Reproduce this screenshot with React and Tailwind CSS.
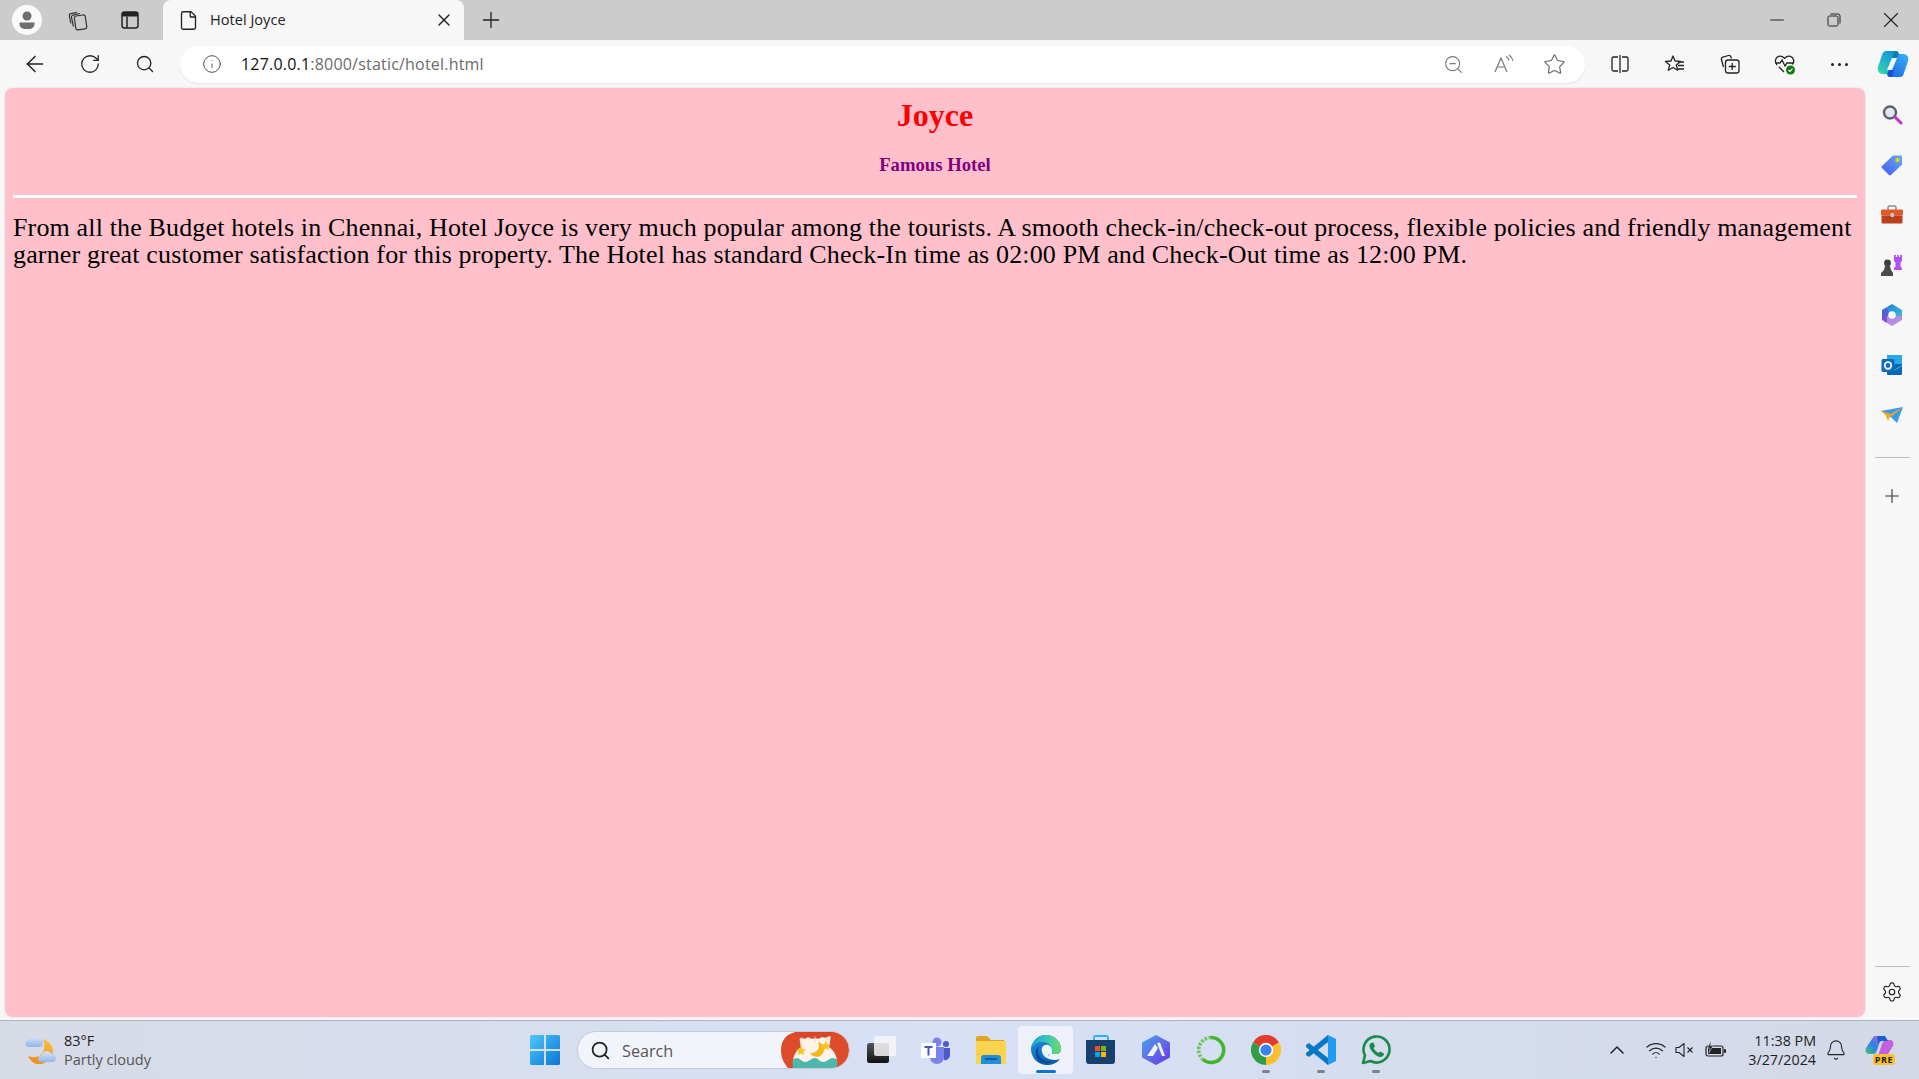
import React from "react";
import { ArrowLeft, RotateCw, Search, Info, ZoomOut, Star, Plus, X, Minus, Settings, ChevronUp, Wifi, Bell, File } from "lucide-react";

function Profile() {
  return (
    <svg width="30" height="30" viewBox="0 0 30 30">
      <circle cx="15" cy="15" r="15" fill="#fafafa" />
      <circle cx="15" cy="11" r="4.5" fill="#6e6e6e" />
      <path d="M7.5 17.5h15v1.500a5 5 0 0 1-5 5h-5a5 5 0 0 1-5-5z" fill="#6e6e6e" />
    </svg>
  );
}
function Workspaces() {
  return (
    <svg width="22" height="22" viewBox="0 0 22 22" fill="none" stroke="#333" strokeWidth="1.2">
      <rect x="8" y="6.5" width="11" height="14" rx="2" transform="rotate(-8 13 13)" />
      <path d="M6.5 17.5 4.5 8.5a2 2 0 0 1 1.5-2.4l7-1.600" />
      <path d="M3.800 14.500 2.400 7a2 2 0 0 1 1.600-2.300l6-1.400" />
    </svg>
  );
}
function TabsIcon() {
  return (
    <svg width="20" height="20" viewBox="0 0 20 20" fill="none">
      <rect x="2" y="2" width="16" height="16" rx="2.5" stroke="#222" strokeWidth="1.5" />
      <path d="M2 6.5V4.500A2.500 2.500 0 0 1 4.500 2h11A2.500 2.500 0 0 1 18 4.500v2z" fill="#222" />
      <path d="M7 6.500V18" stroke="#222" strokeWidth="1.5" />
    </svg>
  );
}
function RestoreIcon() {
  return (
    <svg width="14" height="14" viewBox="0 0 14 14" fill="none" stroke="#222" strokeWidth="1">
      <rect x="1" y="3" width="10" height="10" rx="1.5" />
      <path d="M3.500 1h7.500A2 2 0 0 1 13 3v7.500" />
    </svg>
  );
}
function ReadAloud() {
  return (
    <svg width="22" height="20" viewBox="0 0 22 20" fill="none" stroke="#777" strokeWidth="1.2">
      <path d="M2 18 8 4l6 14M4.200 13h7.600" />
      <path d="M13 2.500a7 7 0 0 1 3 4M16 1a9 9 0 0 1 4 6" />
    </svg>
  );
}
function SplitIcon() {
  return (
    <svg width="20" height="20" viewBox="0 0 20 20" fill="none" stroke="#222" strokeWidth="1.3">
      <path d="M8 3H3.500A1.500 1.500 0 0 0 2 4.500v11A1.500 1.500 0 0 0 3.500 17H8" />
      <path d="M12 3h4.500A1.500 1.500 0 0 1 18 4.500v11a1.500 1.500 0 0 1-1.500 1.500H12" />
      <path d="M10 1v18" />
    </svg>
  );
}
function FavList() {
  return (
    <svg width="22" height="20" viewBox="0 0 22 20" fill="none" stroke="#222" strokeWidth="1.3" strokeLinejoin="round">
      <path d="M9 2l2 5 5.500.4-4.200 3.500 1.400 5.300L9 13.500l-4.700 2.700 1.400-5.300L1.500 7.400 7 7z" />
      <path d="M14 8h6M14 11.500h6M14 15h6" />
    </svg>
  );
}
function Collections() {
  return (
    <svg width="22" height="22" viewBox="0 0 22 22" fill="none" stroke="#222" strokeWidth="1.3">
      <path d="M4.500 14 2.500 6.500a2 2 0 0 1 1.400-2.400l5.500-1.600a2 2 0 0 1 2.400 1.200l.6 1.800" />
      <rect x="6.500" y="7" width="13.500" height="13" rx="2.500" />
      <path d="M13.200 10v7M9.800 13.500h7" />
    </svg>
  );
}
function Health() {
  return (
    <svg width="24" height="24" viewBox="0 0 24 24" fill="none">
      <path d="M4 13C1.500 10 2 5.500 5.500 4.300c2.500-.8 4.500.4 6 2 1.500-1.600 3.500-2.800 6-2C21 5.500 21.500 10 19.500 12.500M6 15l5 5" stroke="#222" strokeWidth="1.3" />
      <path d="M2.500 11h4.500l2-3 3 6 2-3h6" stroke="#222" strokeWidth="1.3" />
      <circle cx="17.500" cy="18" r="4.500" fill="#107c10" />
      <path d="M15.500 18l1.500 1.500 2.500-2.800" stroke="#fff" strokeWidth="1.2" />
    </svg>
  );
}
function CopilotBlue() {
  return (
    <svg width="32" height="28" viewBox="0 0 32 28">
      <defs>
        <linearGradient id="cb1" x1="0" y1="1" x2="0.700" y2="0">
          <stop offset="0" stopColor="#35dca8" />
          <stop offset="1" stopColor="#1590dc" />
        </linearGradient>
        <linearGradient id="cb2" x1="0.300" y1="1" x2="1" y2="0">
          <stop offset="0" stopColor="#1e6fe6" />
          <stop offset="1" stopColor="#35b4f5" />
        </linearGradient>
      </defs>
      <path d="M9 1h9c2 0 2.500 1 3 2l-9 21H6C2 24 0 21 1 17L5 5C6 2 7 1 9 1z" fill="url(#cb1)" />
      <path d="M23 27h-9c-2 0-2.500-1-3-2l9-21h6c4 0 6 3 5 7l-4 12c-1 3-2 4-4 4z" fill="url(#cb2)" />
      <path d="M17 1h2c2 0 2.500 1 3 3l-2 4h-5z" fill="#0f7fb0" />
      <path d="M15 27h-2c-2 0-2.500-1-3-3l2-4h5z" fill="#1f4fd8" />
      <path d="M15 8h5l-5 12h-5z" fill="#f4fbff" />
    </svg>
  );
}
function Magnifier() {
  return (
    <svg width="22" height="22" viewBox="0 0 22 22" fill="none">
      <circle cx="9" cy="8.500" r="6" stroke="#5c5f66" strokeWidth="2.400" fill="#dfe8f2" />
      <path d="M14 13l6 6" stroke="#c22fd6" strokeWidth="3" strokeLinecap="round" />
    </svg>
  );
}
function TagIcon() {
  return (
    <svg width="22" height="22" viewBox="0 0 22 22">
      <defs>
        <linearGradient id="tg" x1="0" y1="1" x2="1" y2="0">
          <stop offset="0" stopColor="#4b55f0" />
          <stop offset="1" stopColor="#5cb0f5" />
        </linearGradient>
      </defs>
      <path d="M1 12 12 1.500h8a1 1 0 0 1 1 1v8L10 21a1.500 1.500 0 0 1-2 0L1 14a1.500 1.500 0 0 1 0-2z" fill="url(#tg)" />
      <circle cx="16.500" cy="6" r="2.200" fill="#f5c518" />
    </svg>
  );
}
function Toolbox() {
  return (
    <svg width="24" height="20" viewBox="0 0 24 20">
      <path d="M8 5V2.500A1.500 1.500 0 0 1 9.500 1h5A1.500 1.500 0 0 1 16 2.500V5" fill="none" stroke="#8a8a8a" strokeWidth="1.500" />
      <rect x="1" y="4.500" width="22" height="6" rx="1" fill="#e0592a" />
      <rect x="1.500" y="10.500" width="21" height="8" rx="1" fill="#b8401c" />
      <rect x="10.500" y="8" width="3.500" height="4" rx="1" fill="#c9c9c9" />
    </svg>
  );
}
function Chess() {
  return (
    <svg width="24" height="24" viewBox="0 0 24 24">
      <path d="M14 2h1.800v2h1.400V2h1.600v2h1.400V2H22v6l-1.500 1.500v4L22 15v2h-8v-2l1.500-1.500v-4L14 8z" fill="#b44ff0" />
      <circle cx="7.500" cy="10" r="3.400" fill="#3f3f3f" />
      <path d="M5 13h5l1 4 2 3v3H1v-3l3-3z" fill="#4a4a4a" />
    </svg>
  );
}
function M365() {
  return (
    <svg width="22" height="24" viewBox="0 0 22 24">
      <defs>
        <linearGradient id="m1" x1="0" y1="0" x2="1" y2="0.600">
          <stop offset="0" stopColor="#1f7fd8" />
          <stop offset="1" stopColor="#35b5d8" />
        </linearGradient>
        <linearGradient id="m2" x1="0" y1="0" x2="0.400" y2="1">
          <stop offset="0" stopColor="#2a6fd8" />
          <stop offset="1" stopColor="#8a4fd8" />
        </linearGradient>
      </defs>
      <path d="M6 4 1 7v10l5 3 4-5-1-5z" fill="url(#m2)" />
      <path d="M11 1 21 7v6h-6l-6-3L6 4z" fill="url(#m1)" />
      <path d="M21 13v4l-10 6-5-3v-7h9z" fill="#b98ae8" />
      <circle cx="11" cy="12" r="3.800" fill="#f7f7f7" />
    </svg>
  );
}
function Outlook() {
  return (
    <svg width="22" height="22" viewBox="0 0 22 22">
      <rect x="6" y="1" width="15" height="10" fill="#28a8ea" />
      <path d="M6 10h15v10a1 1 0 0 1-1 1H7a1 1 0 0 1-1-1z" fill="#0a64b4" />
      <path d="M21 11 13 16 6 11v2l7 4 8-5z" fill="#50d9ff" opacity="0.7" />
      <rect x="0.500" y="5" width="13" height="13" rx="1.500" fill="#0f6cbd" />
      <circle cx="7" cy="11.500" r="3.300" fill="none" stroke="#fff" strokeWidth="1.700" />
    </svg>
  );
}
function Send() {
  return (
    <svg width="24" height="18" viewBox="0 0 24 18">
      <path d="M1 5 23 1 17 17l-5-5z" fill="#3a9be8" />
      <path d="M1 5l10 3L8 15 5.500 9z" fill="#f0a91f" />
      <path d="M11 8 23 1 11 11z" fill="#f0a91f" />
    </svg>
  );
}
function Weather() {
  const cloud = "M4 11a3.500 3.500 0 0 1-.4-7A5.500 5.500 0 0 1 13.500 2.800 4.200 4.200 0 0 1 15 11z";
  return (
    <svg width="34" height="32" viewBox="0 0 34 32">
      <defs>
        <linearGradient id="wm" x1="0.800" y1="0" x2="0.200" y2="1">
          <stop offset="0" stopColor="#fbbf3c" />
          <stop offset="1" stopColor="#ee8a1e" />
        </linearGradient>
        <linearGradient id="wc" x1="0" y1="0" x2="0" y2="1">
          <stop offset="0" stopColor="#d6e4f7" />
          <stop offset="1" stopColor="#93b6ea" />
        </linearGradient>
      </defs>
      <path d="M20 5C28 8 31 14 30 19 28 27 20 31 14 30 10 29.500 7 26 5 22 12 25 20 22 21 15 22 11 21 8 20 5z" fill="url(#wm)" />
      <path d={cloud} transform="translate(2 2)" fill="url(#wc)" />
      <path d={cloud} transform="translate(15 17)" fill="url(#wc)" />
    </svg>
  );
}
function WinLogo() {
  return (
    <svg width="30" height="30" viewBox="0 0 30 30">
      <defs>
        <linearGradient id="wl" x1="0" y1="0" x2="1" y2="1">
          <stop offset="0" stopColor="#4fc8f8" />
          <stop offset="1" stopColor="#0a74d6" />
        </linearGradient>
      </defs>
      <path d="M0 1.500A1.500 1.500 0 0 1 1.500 0H14v14H0zM16 0h12.500A1.500 1.500 0 0 1 30 1.500V14H16zM0 16h14v14H1.500A1.500 1.500 0 0 1 0 28.500zM16 16h14v12.500a1.500 1.500 0 0 1-1.500 1.500H16z" fill="url(#wl)" />
    </svg>
  );
}
function SearchArt() {
  return (
    <svg width="68" height="36" viewBox="0 0 68 36">
      <rect x="0" y="0" width="68" height="36" rx="18" fill="#fdf3ea" />
      <path d="M11 28q5-4 9 0t9 0 9 0 9 0 10 0v8H11z" fill="#4fb8ad" />
      <path d="M14 0h40v3q-3 3-6 1-3 3-7 1-3 3-7 1-3 2-7-1-3 3-6 1-3 2-7-1z" fill="#d9452a" />
      <path d="M18 0C6 0 0 8 0 18c0 8 3 13 7 18h5c-1-7 0-15 8-21-1-5-2-10-2-15z" fill="#de4b2b" />
      <path d="M50 0c12 0 18 8 18 18 0 8-3 13-7 18h-5c1-7 0-15-8-21 1-5 2-10 2-15z" fill="#de4b2b" />
      <path d="M20 5v9M45 5v6M34 4v6" stroke="#e0c9a8" strokeWidth="0.700" />
      <path d="M37 10a7.500 7.500 0 1 1-8 11 7.500 7.500 0 0 0 8-11z" fill="#f4b81e" />
      <path d="M20 14l1.500 3 3.300.4-2.400 2.300.6 3.300-3-1.600-3 1.600.6-3.300-2.400-2.300 3.300-.4zM45 9l1.500 3 3.300.4-2.400 2.300.6 3.300-3-1.600-3 1.600.6-3.300-2.400-2.300 3.300-.4z" fill="#f5c51e" />
    </svg>
  );
}
function TaskView() {
  return (
    <svg width="30" height="30" viewBox="0 0 30 30">
      <defs>
        <linearGradient id="tv" x1="0" y1="0" x2="0" y2="1">
          <stop offset="0" stopColor="#555" />
          <stop offset="1" stopColor="#111" />
        </linearGradient>
      </defs>
      <rect x="1" y="8" width="22" height="20" rx="2.500" fill="url(#tv)" />
      <rect x="8" y="1" width="22" height="20" rx="2.500" fill="#f6f6f8" opacity="0.85" />
    </svg>
  );
}
function Teams() {
  return (
    <svg width="30" height="28" viewBox="0 0 30 28">
      <circle cx="16" cy="6" r="4.500" fill="#7b83eb" />
      <circle cx="25" cy="8" r="3" fill="#5059c9" />
      <path d="M21 12h8v8a5 5 0 0 1-6 4z" fill="#5059c9" />
      <path d="M9 11h14v10a6.500 6.500 0 0 1-14 0z" fill="#7b83eb" />
      <rect x="0" y="7" width="15" height="15" fill="#fff" />
      <path d="M3.500 10h8v2h-3v7.500h-2V12h-3z" fill="#4b53bc" />
    </svg>
  );
}
function Folder() {
  return (
    <svg width="30" height="28" viewBox="0 0 30 28">
      <path d="M0 2a2 2 0 0 1 2-2h9l4 4h13v6H0z" fill="#e0a526" />
      <path d="M0 5h30v23H0z" fill="#fbd34c" />
      <path d="M5 28v-6a3 3 0 0 1 3-3h14a3 3 0 0 1 3 3v6z" fill="#1f8fd8" />
      <rect x="9" y="22" width="12" height="2" fill="#0f5fa8" />
    </svg>
  );
}
function Edge() {
  return (
    <svg width="30" height="30" viewBox="0 0 30 30">
      <defs>
        <linearGradient id="eg" x1="0" y1="0.500" x2="1" y2="0.500">
          <stop offset="0" stopColor="#1a9fd8" />
          <stop offset="0.500" stopColor="#36c5b8" />
          <stop offset="1" stopColor="#6fdc62" />
        </linearGradient>
        <linearGradient id="eb" x1="0" y1="0" x2="0.700" y2="1">
          <stop offset="0" stopColor="#1c8fdc" />
          <stop offset="1" stopColor="#0c5fb0" />
        </linearGradient>
      </defs>
      <path d="M0 14C1 6 7 0 15 0c9 0 15 7 15 14 0 3-2 5-5 5h-6c-1 0-2 1-1 3 2 3 6 4 11 2-3 4-8 6-13 6C7 30 0 23 0 14z" fill="url(#eb)" />
      <path d="M9 27C4 23 3 15 8 11c-2 4-1 10 3 13 3 2 7 3 12 2-4 3-10 3-14 1z" fill="#0b4a98" />
      <path d="M0 14C1 6 7 0 15 0c9 0 15 7 15 14 0 3-2 5-5 5h-6c1-1 2-2 2-4 0-5-5-8-10-8-5 0-9 3-11 7z" fill="url(#eg)" />
      <path d="M21 15c0-3-3-6-7-5-3 1-4 4-3 7 1 4 4 6 7 7 3 .8 6 .6 8 0-3 .4-6-.4-8-2.400-1-1.600-1-2.600 1-2.600h2z" fill="#e9f4fb" />
    </svg>
  );
}
function Store() {
  return (
    <svg width="30" height="30" viewBox="0 0 30 30">
      <path d="M8 6V2.500A1.500 1.500 0 0 1 9.500 1h11A1.500 1.500 0 0 1 22 2.500V6" fill="none" stroke="#2bb4ee" strokeWidth="1.800" />
      <path d="M0 5h29v21a3 3 0 0 1-3 3H3a3 3 0 0 1-3-3z" fill="#17406f" />
      <rect x="9" y="11" width="5" height="5" fill="#f25022" />
      <rect x="15" y="11" width="5" height="5" fill="#7fba00" />
      <rect x="9" y="17" width="5" height="5" fill="#00a4ef" />
      <rect x="15" y="17" width="5" height="5" fill="#ffb900" />
    </svg>
  );
}
function Hex() {
  return (
    <svg width="28" height="30" viewBox="0 0 28 30">
      <defs>
        <linearGradient id="hx" x1="0" y1="0" x2="1" y2="1">
          <stop offset="0" stopColor="#4fa4e8" />
          <stop offset="1" stopColor="#6a35e8" />
        </linearGradient>
      </defs>
      <path d="M14 0l14 7.500v15L14 30 0 22.500v-15z" fill="url(#hx)" />
      <path d="M5 21 13 9l3 4-5 8M15 8l3-.5 5 13.500h-3z" fill="#eef2fb" />
    </svg>
  );
}
function RingIcon() {
  return (
    <svg width="30" height="30" viewBox="0 0 30 30" fill="none">
      <path d="M15 2.500a12.500 12.500 0 1 1-8 22" stroke="#41b52c" strokeWidth="3.600" />
      <path d="M15 2.500A12.500 12.500 0 0 0 7 24.500" stroke="#6cc655" strokeWidth="3.600" strokeDasharray="2.500 1.500" />
    </svg>
  );
}
function Chrome() {
  return (
    <svg width="30" height="30" viewBox="0 0 30 30">
      <path d="M15 15 2 7.500A15 15 0 0 1 28 7.500z" fill="#e33b2e" />
      <path d="M15 15 15 30A15 15 0 0 1 2 7.500z" fill="#2f9e44" />
      <path d="M15 15 28 7.500A15 15 0 0 1 15 30z" fill="#fbc02d" />
      <circle cx="15" cy="15" r="7.200" fill="#fff" />
      <circle cx="15" cy="15" r="5.600" fill="#3b82f0" />
    </svg>
  );
}
function VSCode() {
  return (
    <svg width="30" height="30" viewBox="0 0 30 30">
      <path d="M22 0 30 4v22l-8 4L9 15z" fill="#1f9cf0" />
      <path d="M22 7v16L8 15z" fill="#d6dcf0" />
      <path d="M3 8l19 15v7L0 12v-2z" fill="#0a78c2" />
      <path d="M22 0v7L3 22l-3-2v-2z" fill="#0a78c2" />
    </svg>
  );
}
function WhatsApp() {
  return (
    <svg width="30" height="30" viewBox="0 0 30 30" fill="none">
      <path d="M2 28l2-7.500A13 13 0 1 1 9.500 26z" stroke="#1c8a4a" strokeWidth="2.600" strokeLinejoin="round" />
      <path d="M10 8c-2 1-2 4 0 7s6 7 9 7 4-2 4-3.500l-4-2-1.500 1.500c-2-1-4-3-5-5l1.500-1.500-1.500-4z" fill="#1c8a4a" />
    </svg>
  );
}
function Speaker() {
  return (
    <svg width="20" height="16" viewBox="0 0 20 16" fill="none" stroke="#222" strokeWidth="1.100">
      <path d="M1 5.500h3L9 1.500v13l-5-4H1z" strokeLinejoin="round" />
      <path d="M12.500 5.500l5 5M17.500 5.500l-5 5" />
    </svg>
  );
}
function Battery() {
  return (
    <svg width="22" height="18" viewBox="0 0 22 18">
      <rect x="1" y="5" width="17" height="10" rx="2" fill="none" stroke="#222" strokeWidth="1.200" />
      <rect x="3" y="7" width="13" height="6" fill="#222" />
      <rect x="19" y="8" width="2" height="4" rx="1" fill="#222" />
      <path d="M6 0 2.500 7H5l-1 5 4-7H5.500z" fill="#222" stroke="#d6dbe6" strokeWidth="0.500" />
    </svg>
  );
}
function CopilotPre() {
  return (
    <div className="relative h-[30px] w-[30px]">
      <svg width="30" height="24" viewBox="0 0 30 24">
        <defs>
          <linearGradient id="cp" x1="0" y1="1" x2="1" y2="0">
            <stop offset="0" stopColor="#3fc96a" />
            <stop offset="0.500" stopColor="#2f7df0" />
            <stop offset="1" stopColor="#e05fc0" />
          </linearGradient>
        </defs>
        <path d="M9 1h8l-5 14c-1 3-2 4-4 4H4C1 19 0 16 1 13z" fill="url(#cp)" />
        <path d="M20 24h-8l5-15c1-2 2-4 4-4h4c3 0 4 3 3 6z" fill="#c45fe0" />
        <path d="M12 1h8l3 5h-6c-2 0-3 1-4 3z" fill="#1b5fd8" />
      </svg>
      <span className="absolute bottom-0 right-0 rounded-[3px] bg-[#fbc02d] px-[2px] text-[9px] font-bold leading-[11px] tracking-[0.5px] text-[#222]">PRE</span>
    </div>
  );
}

function Slot({ children, w = "w-[55px]", dot, bar, active }) {
  return (
    <div className={`relative flex h-[48px] shrink-0 items-center justify-center rounded-[4px] ${w} ${active ? "bg-[#eef1fa]" : ""}`}>
      {children}
      {dot && <span className="absolute bottom-[1px] h-[3px] w-[8px] rounded-full bg-[#7f8288]" />}
      {bar && <span className="absolute bottom-[1px] h-[3px] w-[20px] rounded-full bg-[#0a74d6]" />}
    </div>
  );
}

function Btn({ children, w = "w-[55px]" }) {
  return <div className={`flex h-full shrink-0 items-center justify-center ${w}`}>{children}</div>;
}

function SideBtn({ children }) {
  return <div className="flex h-[50px] shrink-0 items-center justify-center">{children}</div>;
}

export default function App() {
  const ui = { fontFamily: '"Open Sans", "Noto Sans", sans-serif' };
  const serif = { fontFamily: '"Liberation Serif", serif' };
  return (
    <div className="flex h-screen w-full flex-col overflow-hidden bg-[#f7f7f7]" style={ui}>
      {/* tab strip */}
      <div className="flex h-[40px] shrink-0 items-center bg-[#cccccc]">
        <Btn w="w-[54px]"><Profile /></Btn>
        <Btn w="w-[48px]"><Workspaces /></Btn>
        <Btn w="w-[56px]"><TabsIcon /></Btn>
        <div className="ml-[5px] flex h-full w-[301px] items-center rounded-t-[8px] bg-[#f7f7f7]">
          <File size={21} strokeWidth={1.5} color="#222" className="ml-[15px]" />
          <span className="ml-[11px] text-[14.6px] text-[#222]">Hotel Joyce</span>
          <X size={20} strokeWidth={1.7} color="#222" className="ml-auto mr-[10px]" />
        </div>
        <Btn w="w-[54px]"><Plus size={26} strokeWidth={1.2} color="#222" /></Btn>
        <div className="flex-1" />
        <Btn w="w-[56px]"><Minus size={22} strokeWidth={1.1} color="#222" /></Btn>
        <Btn w="w-[57px]"><RestoreIcon /></Btn>
        <Btn w="w-[57px]"><X size={26} strokeWidth={1} color="#222" /></Btn>
      </div>

      {/* toolbar */}
      <div className="flex h-[48px] shrink-0 items-center pl-[7px]">
        <Btn><ArrowLeft size={26} strokeWidth={1.4} color="#222" /></Btn>
        <Btn><RotateCw size={22} strokeWidth={1.4} color="#222" /></Btn>
        <Btn><Search size={20} strokeWidth={1.6} color="#222" /></Btn>
        <div className="ml-[8px] flex h-[37px] w-[1405px] shrink-0 items-center rounded-full bg-white shadow-[0_1px_2px_rgba(0,0,0,0.08)]">
          <Info size={20} strokeWidth={1.2} color="#555" className="ml-[22px]" />
          <span className="ml-[19px] text-[16px] tracking-[0.2px] text-[#6b6b6b]">
            <span className="text-[#111]">127.0.0.1</span>:8000/static/hotel.html
          </span>
          <div className="ml-auto flex h-full items-center pr-[6px]">
            <Btn w="w-[52px]"><ZoomOut size={21} strokeWidth={1.2} color="#777" /></Btn>
            <Btn w="w-[50px]"><ReadAloud /></Btn>
            <Btn w="w-[50px]"><Star size={23} strokeWidth={1.2} color="#666" /></Btn>
          </div>
        </div>
        <div className="ml-[7px] flex h-full">
          <Btn><SplitIcon /></Btn>
          <Btn><FavList /></Btn>
          <Btn><Collections /></Btn>
          <Btn><Health /></Btn>
          <Btn><span className="flex gap-[4px]"><i className="h-[3px] w-[3px] rounded-full bg-[#222]" /><i className="h-[3px] w-[3px] rounded-full bg-[#222]" /><i className="h-[3px] w-[3px] rounded-full bg-[#222]" /></span></Btn>
        </div>
        <Btn w="flex-1"><CopilotBlue /></Btn>
      </div>

      {/* main */}
      <div className="flex min-h-0 flex-1">
        <main
          className="mb-[3px] ml-[5px] w-[1860px] shrink-0 rounded-[8px] bg-[#ffc0cb] pl-[8px] pr-[8px] pt-[9px] shadow-[0_0_2px_rgba(0,0,0,0.15)]"
          style={serif}
        >
          <h1 className="text-center text-[32px] font-bold leading-[37px] text-[#ff0000]">Joyce</h1>
          <h3 className="mt-[20px] text-center text-[18.7px] font-bold leading-[21px] text-[#800080]">Famous Hotel</h3>
          <hr className="mt-[20px] h-[3px] border-0 bg-white" />
          <p className="mt-[16px] text-[26px] leading-[27px] tracking-[0.15px] text-black oldstyle-nums">
            From all the Budget hotels in Chennai, Hotel Joyce is very much popular among the tourists. A smooth check-in/check-out process, flexible policies and friendly management garner great customer satisfaction for this property. The Hotel has standard Check-In time as 02:00 PM and Check-Out time as 12:00 PM.
          </p>
        </main>
        <aside className="flex flex-1 flex-col items-center pb-[3px] pt-[2px]">
          <SideBtn><Magnifier /></SideBtn>
          <SideBtn><TagIcon /></SideBtn>
          <SideBtn><Toolbox /></SideBtn>
          <SideBtn><Chess /></SideBtn>
          <SideBtn><M365 /></SideBtn>
          <SideBtn><Outlook /></SideBtn>
          <SideBtn><Send /></SideBtn>
          <div className="mt-[17px] h-px w-[35px] bg-[#bdbdbd]" />
          <div className="mt-[13px]"><SideBtn><Plus size={22} strokeWidth={1.2} color="#333" /></SideBtn></div>
          <div className="mt-auto h-px w-[35px] bg-[#bdbdbd]" />
          <SideBtn><Settings size={22} strokeWidth={1.3} color="#222" /></SideBtn>
        </aside>
      </div>

      {/* taskbar */}
      <div className="flex h-[59px] shrink-0 items-center border-t border-[#aeb2bd] bg-gradient-to-r from-[#d6dbe6] via-[#d8e0f6] to-[#d3d9e6]">
        <div className="flex w-[517px] shrink-0 items-center pl-[23px]">
          <Weather />
          <div className="ml-[7px] flex flex-col">
            <span className="text-[14.5px] leading-[19px] text-[#222]">83°F</span>
            <span className="text-[14.5px] leading-[20px] text-[#555]">Partly cloudy</span>
          </div>
        </div>
        <Slot><WinLogo /></Slot>
        <div className="ml-[5px] mr-[3px] flex h-[38px] w-[273px] shrink-0 items-center overflow-hidden rounded-full border border-[#c4cad8] bg-[#f2f4fb] pl-[12px]">
          <Search size={21} strokeWidth={2} color="#222" />
          <span className="ml-[11px] mt-[2px] text-[16.2px] text-[#555]">Search</span>
          <div className="ml-auto flex"><SearchArt /></div>
        </div>
        <Slot><TaskView /></Slot>
        <Slot><Teams /></Slot>
        <Slot><Folder /></Slot>
        <Slot active bar><Edge /></Slot>
        <Slot><Store /></Slot>
        <Slot><Hex /></Slot>
        <Slot><RingIcon /></Slot>
        <Slot dot><Chrome /></Slot>
        <Slot dot><VSCode /></Slot>
        <Slot dot><WhatsApp /></Slot>
        <div className="ml-auto flex h-full items-center pr-[14px]">
          <Btn w="w-[39px]"><ChevronUp size={24} strokeWidth={1.5} color="#222" /></Btn>
          <Btn w="ml-[5px] w-[30px]"><Wifi size={22} strokeWidth={1.3} color="#222" /></Btn>
          <Btn w="w-[28px]"><Speaker /></Btn>
          <Btn w="ml-[2px] w-[30px]"><Battery /></Btn>
          <div className="flex w-[85px] flex-col items-end text-[14.3px] leading-[19px] text-[#222]">
            <span>11:38 PM</span>
            <span>3/27/2024</span>
          </div>
          <Btn w="ml-px w-[38px]"><Bell size={22} strokeWidth={1.2} color="#222" /></Btn>
          <Btn w="w-[50px]"><CopilotPre /></Btn>
        </div>
      </div>
    </div>
  );
}
